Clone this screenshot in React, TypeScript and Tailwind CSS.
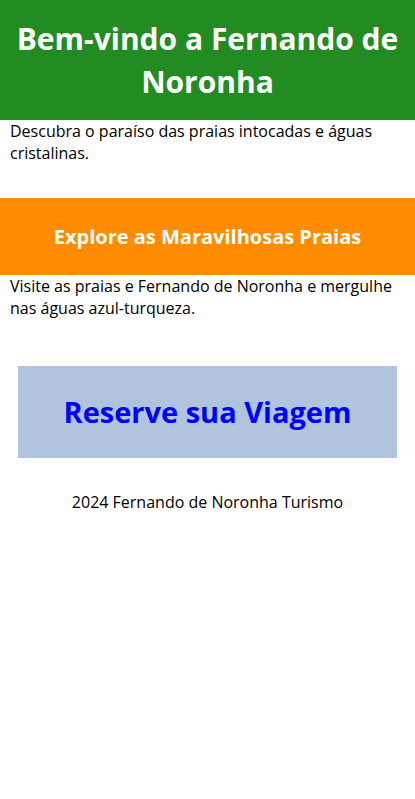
export default function App() {
  return (
    <div className="min-h-screen bg-white font-['Open_Sans',sans-serif] text-black">
      {/* Header */}
      <header className="bg-[#228B22] px-4 py-[17px] text-center">
        <h1 className="text-[30px] font-bold leading-[43px] text-white">
          Bem-vindo a Fernando de Noronha
        </h1>
      </header>
      <p className="px-[10px] text-[16px] leading-[22px]">
        Descubra o paraíso das praias intocadas e águas cristalinas.
      </p>

      {/* Praias */}
      <section className="mt-[34px] bg-[#FF8C00] py-[25px] text-center">
        <h2 className="text-[20px] font-bold leading-[27px] text-white">
          Explore as Maravilhosas Praias
        </h2>
      </section>
      <p className="px-[10px] text-[16px] leading-[22px]">
        Visite as praias e Fernando de Noronha e mergulhe nas águas azul-turqueza.
      </p>

      {/* Reserva */}
      <div className="mx-[18px] mt-[47px] flex h-[92px] items-center justify-center bg-[#B0C4DE]">
        <span className="text-[29px] font-bold text-[#0000FF]">Reserve sua Viagem</span>
      </div>

      <footer className="mt-[33px] text-center text-[16px] leading-[22px]">
        2024 Fernando de Noronha Turismo
      </footer>
    </div>
  );
}
